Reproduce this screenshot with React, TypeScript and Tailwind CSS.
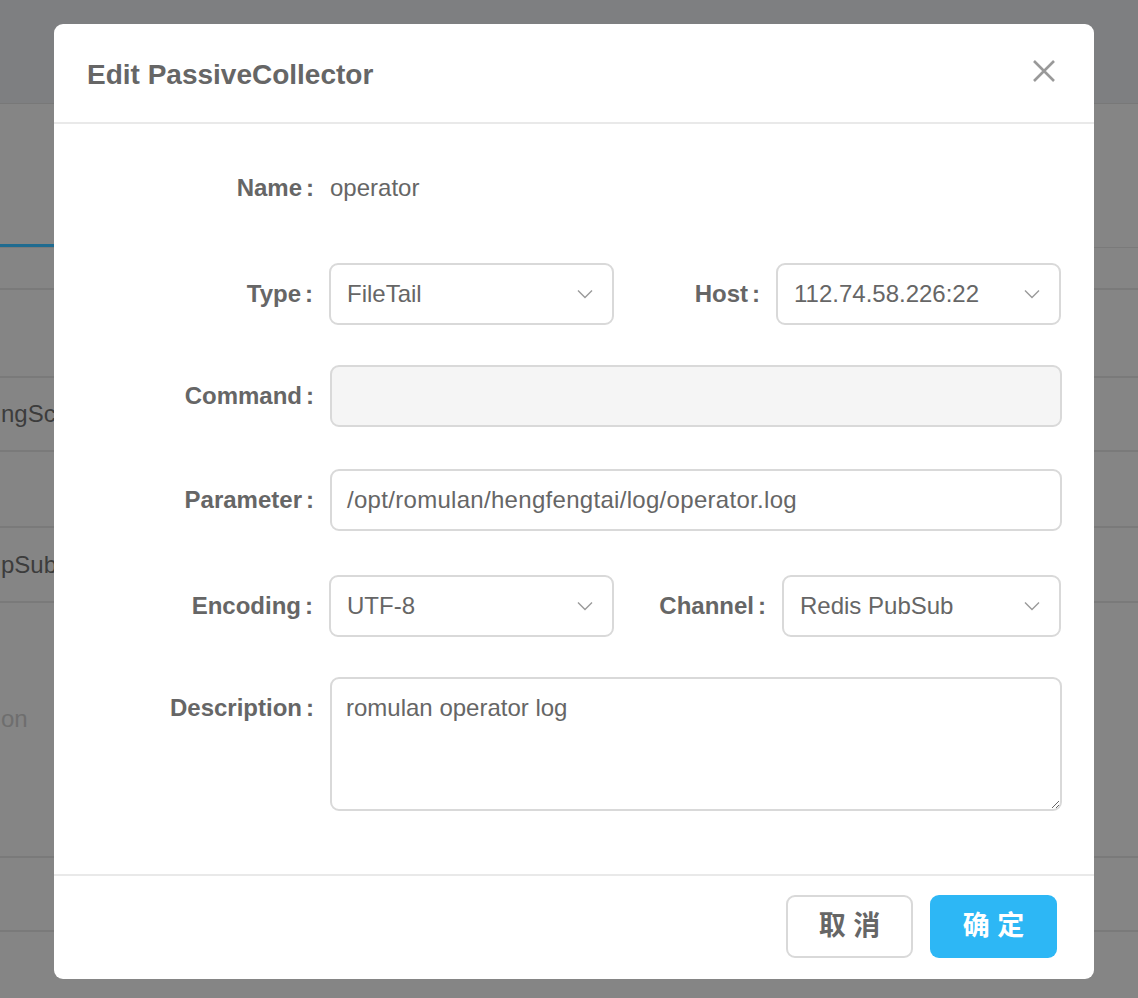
import React from 'react';

const font = "font-['Liberation_Sans','Noto_Sans_CJK_SC',sans-serif]";

const Chevron: React.FC = () => (
  <svg width="16" height="10" viewBox="0 0 16 10" fill="none" className="shrink-0">
    <path d="M1 1.5 L8 8.5 L15 1.5" stroke="#9a9a9a" strokeWidth="1.4" />
  </svg>
);

const Label: React.FC<{ text: string; width: string }> = ({ text, width }) => (
  <div className={`${width} shrink-0 flex justify-end items-center text-[24px] font-bold text-[#666]`}>
    <span>{text}</span>
    <span className="ml-[4px] mr-[16px]">:</span>
  </div>
);

const Select: React.FC<{ value: string; width: string }> = ({ value, width }) => (
  <div
    className={`${width} h-[62px] shrink-0 border-2 border-[#d9d9d9] rounded-[9px] bg-white flex items-center justify-between pl-[16px] pr-[19px] text-[24px] text-[#666]`}
  >
    <span>{value}</span>
    <Chevron />
  </div>
);

// page behind the dimmed overlay, mostly hidden by the modal
const BackgroundPage: React.FC = () => (
  <div className="flex flex-col text-[24px]">
    <div className="h-[104px] bg-[#7e7f81] border-b border-[#787878]" />
    <div className="h-[144px] border-b border-[#7a7a7a] flex flex-col justify-end">
      <div className="w-[60px] h-[3px] bg-[#1f6b90]" />
    </div>
    <div className="h-[42px] border-b-2 border-[#7a7a7a]" />
    <div className="h-[88px] border-b-2 border-[#7a7a7a]" />
    <div className="h-[74px] border-b-2 border-[#7a7a7a] flex items-center text-[#3c3c3c]">
      <span className="pl-[1px]">ngSc</span>
    </div>
    <div className="h-[76px] border-b-2 border-[#7a7a7a]" />
    <div className="h-[75px] border-b-2 border-[#7a7a7a] flex items-center text-[#3c3c3c]">
      <span className="pl-[1px]">pSub</span>
    </div>
    <div className="h-[255px] border-b-2 border-[#7a7a7a] pt-[98px] text-[#6e6e6e]">
      <span className="pl-[1px]">on</span>
    </div>
    <div className="h-[74px] border-b-2 border-[#7a7a7a]" />
  </div>
);

const App: React.FC = () => {
  return (
    <div className={`relative w-[1138px] h-[998px] overflow-hidden bg-[#858585] ${font}`}>
      <BackgroundPage />

      {/* modal */}
      <div className="absolute left-[54px] top-[24px] w-[1040px] h-[955px] bg-white rounded-[9px] flex flex-col overflow-hidden">
        <div className="h-[100px] shrink-0 border-b-2 border-[#e9e9e9] flex items-center justify-between pl-[33px] pr-[38px]">
          <h2 className="mt-[3px] text-[28px] font-bold text-[#666]">Edit PassiveCollector</h2>
          <svg width="24" height="24" viewBox="0 0 24 24" fill="none" className="-mt-[4px]">
            <path d="M2 2 L22 22 M22 2 L2 22" stroke="#999" strokeWidth="2.6" />
          </svg>
        </div>

        <div className="flex-1 flex flex-col pt-[33px]">
          <div className="flex items-center h-[62px]">
            <Label text="Name" width="w-[276px]" />
            <span className="text-[24px] text-[#666]">operator</span>
          </div>

          <div className="flex items-center mt-[44px]">
            <Label text="Type" width="w-[275px]" />
            <Select value="FileTail" width="w-[285px]" />
            <Label text="Host" width="w-[162px]" />
            <Select value="112.74.58.226:22" width="w-[285px]" />
          </div>

          <div className="flex items-center mt-[40px]">
            <Label text="Command" width="w-[276px]" />
            <div className="w-[732px] h-[62px] border-2 border-[#d9d9d9] rounded-[9px] bg-[#f5f5f5]" />
          </div>

          <div className="flex items-center mt-[42px]">
            <Label text="Parameter" width="w-[276px]" />
            <div className="w-[732px] h-[62px] border-2 border-[#d9d9d9] rounded-[9px] flex items-center pl-[15px] text-[24px] tracking-[0.3px] text-[#666]">
              /opt/romulan/hengfengtai/log/operator.log
            </div>
          </div>

          <div className="flex items-center mt-[44px]">
            <Label text="Encoding" width="w-[275px]" />
            <Select value="UTF-8" width="w-[285px]" />
            <Label text="Channel" width="w-[168px]" />
            <Select value="Redis PubSub" width="w-[279px]" />
          </div>

          <div className="flex items-start mt-[40px]">
            <div className="pt-[13px]">
              <Label text="Description" width="w-[276px]" />
            </div>
            <textarea
              defaultValue="romulan operator log"
              className={`w-[732px] h-[134px] border-2 border-[#d9d9d9] rounded-[9px] pt-[11px] px-[14px] text-[24px] leading-[36px] text-[#666] outline-none ${font}`}
            />
          </div>
        </div>

        <div className="h-[105px] shrink-0 border-t-2 border-[#e9e9e9] flex items-center justify-end gap-[17px] pr-[37px] pb-[2px]">
          <button className="w-[127px] h-[63px] border-2 border-[#d9d9d9] rounded-[9px] bg-white text-[27px] font-bold text-[#666]">
            取 消
          </button>
          <button className="w-[127px] h-[63px] rounded-[9px] bg-[#2db7f5] text-[27px] font-bold text-white">
            确 定
          </button>
        </div>
      </div>
    </div>
  );
};

export default App;
